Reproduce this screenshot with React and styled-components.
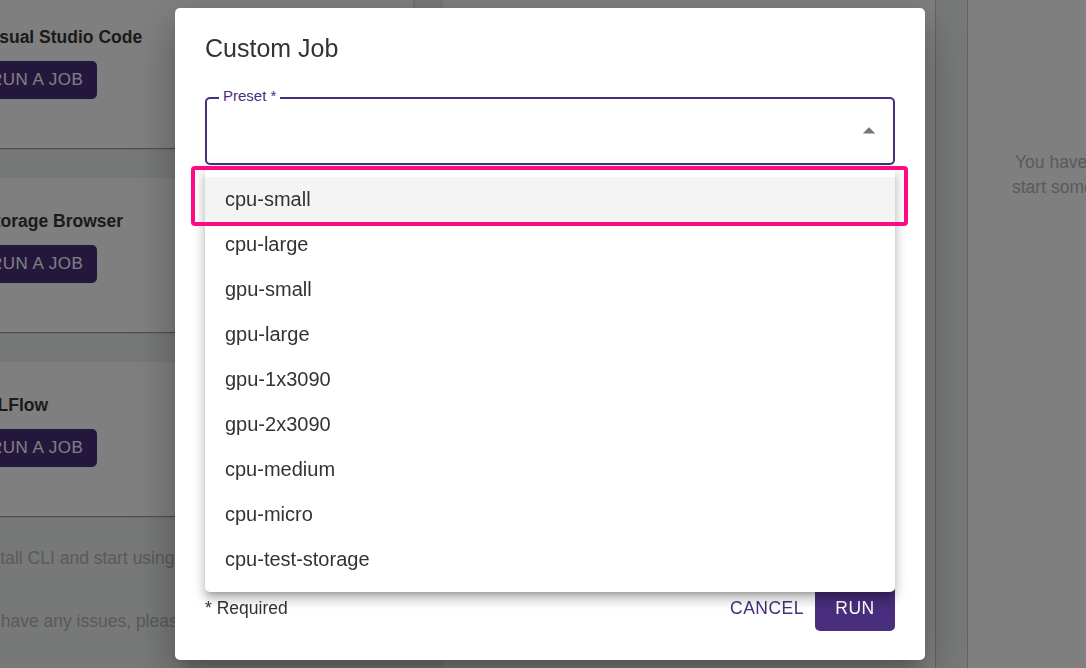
import React from 'react';
import styled, { createGlobalStyle } from 'styled-components';

const PURPLE = '#482e7c';

const GlobalStyle = createGlobalStyle`
  html, body {
    margin: 0;
    padding: 0;
    overflow: hidden;
    background: #eef1f1;
    font-family: 'Liberation Sans', Arial, sans-serif;
  }
`;

const presets = [
  'cpu-small',
  'cpu-large',
  'gpu-small',
  'gpu-large',
  'gpu-1x3090',
  'gpu-2x3090',
  'cpu-medium',
  'cpu-micro',
  'cpu-test-storage',
];

const apps = ['Visual Studio Code', 'Storage Browser', 'MLFlow'];

const App = () => {
  return (
    <>
      <GlobalStyle />
      <Page>
        <LeftColumn>
          {apps.map((name) => (
            <Card key={name}>
              <CardTitle>{name}</CardTitle>
              <CardActions>
                <JobButton>RUN A JOB</JobButton>
              </CardActions>
            </Card>
          ))}
          <InfoGroup>
            <Info $shift={-23}>Install CLI and start using the platform from your terminal.</Info>
            <Info $shift={-47}>If you have any issues, please contact our support team.</Info>
          </InfoGroup>
        </LeftColumn>
        <MiddlePanel />
        <RightPanel>
          <EmptyLine $shift={0}>You have no jobs running yet.</EmptyLine>
          <EmptyLine $shift={-3}>start something</EmptyLine>
        </RightPanel>
      </Page>

      <Backdrop>
        <Dialog>
          <DialogTitle>Custom Job</DialogTitle>
          <DialogBody>
            <SelectField>
              <Label>Preset *</Label>
              <Arrow viewBox="0 0 24 24">
                <path d="M7 14l5-5 5 5z" />
              </Arrow>
              <Menu>
                <Highlight />
                {presets.map((p, i) => (
                  <MenuItem key={p} $active={i === 0}>
                    {p}
                  </MenuItem>
                ))}
              </Menu>
            </SelectField>
          </DialogBody>
          <DialogActions>
            <Required>* Required</Required>
            <TextButton>CANCEL</TextButton>
            <RunButton>RUN</RunButton>
          </DialogActions>
        </Dialog>
      </Backdrop>
    </>
  );
};

const Page = styled.div`
  display: flex;
  height: 668px;
  overflow: hidden;
`;

const LeftColumn = styled.div`
  display: flex;
  flex-direction: column;
  gap: 30px;

  width: 447px;
  flex-shrink: 0;
  margin-left: -34px;
  margin-top: -6px;
`;

const Card = styled.div`
  height: 154px;
  box-sizing: border-box;
  padding-top: 32px;

  background: #fff;
  border-radius: 4px;
  box-shadow: 0 2px 1px -1px rgba(0, 0, 0, 0.2), 0 1px 1px 0 rgba(0, 0, 0, 0.14),
    0 1px 3px 0 rgba(0, 0, 0, 0.12);
`;

const CardTitle = styled.div`
  padding-left: 17px;
  font-size: 17.5px;
  line-height: 22px;
  font-weight: 700;
  color: #363636;
  white-space: nowrap;
`;

const CardActions = styled.div`
  display: flex;
  margin-top: 13px;
  padding-left: 10px;
`;

const JobButton = styled.button`
  height: 38px;
  padding: 0 14px;

  border: none;
  border-radius: 5px;
  background: ${PURPLE};
  color: #fff;

  font-family: inherit;
  font-size: 17px;
  letter-spacing: 0.5px;
`;

const InfoGroup = styled.div`
  display: flex;
  flex-direction: column;
  gap: 39px;
`;

const Info = styled.p`
  margin: 0 0 0 ${(p) => 34 + p.$shift}px;
  font-size: 17.5px;
  line-height: 24px;
  color: #b4b4b4;
  white-space: nowrap;
`;

const MiddlePanel = styled.div`
  width: 492px;
  flex-shrink: 0;
  margin-left: 30px;

  background: #fff;
  border-right: 1px solid #c4c4c4;
`;

const RightPanel = styled.div`
  flex: 1;
  margin-left: 31px;
  padding: 150px 0 0 47px;

  background: #fff;
  border-left: 1px solid #c4c4c4;
`;

const EmptyLine = styled.div`
  margin-left: ${(p) => p.$shift}px;
  font-size: 17.5px;
  line-height: 25px;
  color: #b4b4b4;
  white-space: nowrap;
`;

const Backdrop = styled.div`
  position: fixed;
  inset: 0;
  display: flex;
  align-items: flex-start;
  padding: 8px 0 0 175px;

  background: rgba(0, 0, 0, 0.5);
`;

const Dialog = styled.div`
  display: flex;
  flex-direction: column;

  width: 750px;
  height: 652px;

  background: #fff;
  border-radius: 5px;
  box-shadow: 0 11px 15px -7px rgba(0, 0, 0, 0.2), 0 24px 38px 3px rgba(0, 0, 0, 0.14),
    0 9px 46px 8px rgba(0, 0, 0, 0.12);
`;

const DialogTitle = styled.h2`
  margin: 0;
  padding: 20px 30px 0;

  font-size: 25px;
  line-height: 40px;
  font-weight: 400;
  color: #333;
`;

const DialogBody = styled.div`
  flex: 1;
  padding: 29px 30px 0;
`;

const SelectField = styled.div`
  position: relative;
  display: flex;
  align-items: center;
  justify-content: flex-end;

  height: 68px;
  box-sizing: border-box;
  padding-right: 9px;

  border: 2px solid ${PURPLE};
  border-radius: 5px;
`;

const Label = styled.span`
  position: absolute;
  top: -12px;
  left: 12px;
  padding: 0 4px;

  background: #fff;
  font-size: 15px;
  line-height: 18px;
  color: ${PURPLE};
`;

const Arrow = styled.svg`
  width: 30px;
  height: 30px;
  fill: #757575;
`;

const Menu = styled.div`
  position: absolute;
  top: calc(100% + 4px);
  left: -2px;
  right: -2px;
  z-index: 2;

  padding: 10px 0;
  background: #fff;
  border-radius: 5px;
  box-shadow: 0 5px 5px -3px rgba(0, 0, 0, 0.2), 0 8px 10px 1px rgba(0, 0, 0, 0.14),
    0 3px 14px 2px rgba(0, 0, 0, 0.12);
`;

const MenuItem = styled.div`
  display: flex;
  align-items: center;

  height: 45px;
  padding: 0 20px;

  background: ${(p) => (p.$active ? '#f4f4f4' : 'transparent')};
  font-size: 20px;
  color: #333;
`;

const Highlight = styled.div`
  position: absolute;
  top: -1px;
  left: -14px;
  width: 717px;
  height: 60px;
  box-sizing: border-box;

  border: 4px solid #ff0a85;
  border-radius: 4px;
  pointer-events: none;
`;

const DialogActions = styled.div`
  display: flex;
  align-items: center;
  padding: 0 30px 29px;
`;

const Required = styled.span`
  flex: 1;
  font-size: 17.5px;
  color: #333;
`;

const TextButton = styled.button`
  height: 45px;
  padding: 0 10px;
  margin-right: 1px;

  border: none;
  background: none;
  color: ${PURPLE};

  font-family: inherit;
  font-size: 17.5px;
  letter-spacing: 0.5px;
`;

const RunButton = styled.button`
  width: 80px;
  height: 45px;
  padding: 0;

  border: none;
  border-radius: 5px;
  background: ${PURPLE};
  color: #fff;

  font-family: inherit;
  font-size: 17.5px;
  letter-spacing: 0.5px;
`;

export default App;
